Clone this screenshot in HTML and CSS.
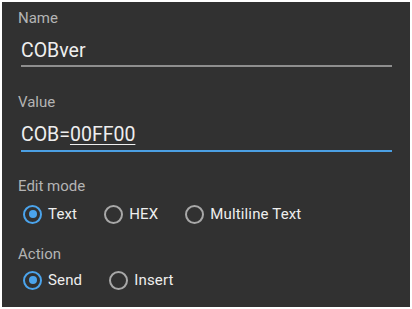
FILE: index.html
```html
<!DOCTYPE html>
<html>
<head>
<meta charset="utf-8">
<link rel="stylesheet" href="styles.css">
</head>
<body>
<div class="panel">
  <div class="label label-name">Name</div>
  <div class="field field-name"><span class="value">COBver</span></div>
  <div class="label label-value">Value</div>
  <div class="field field-active"><span class="value">COB=<span class="compose">00FF00</span></span></div>
  <div class="label label-mode">Edit mode</div>
  <div class="radios radios-mode">
    <div class="radio"><span class="ring checked"></span><span class="rtext">Text</span></div>
    <div class="radio"><span class="ring"></span><span class="rtext">HEX</span></div>
    <div class="radio"><span class="ring"></span><span class="rtext">Multiline Text</span></div>
  </div>
  <div class="label label-action">Action</div>
  <div class="radios radios-action">
    <div class="radio"><span class="ring checked"></span><span class="rtext">Send</span></div>
    <div class="radio"><span class="ring"></span><span class="rtext">Insert</span></div>
  </div>
</div>
</body>
</html>
```

FILE: styles.css
```css
html, body {
  margin: 0;
  padding: 0;
  background: #ffffff;
}
body {
  width: 412px;
  height: 309px;
  overflow: hidden;
  font-family: Roboto, "Liberation Sans", sans-serif;
}
.panel {
  margin: 2px;
  height: 305px;
  background: #313131;
  box-sizing: border-box;
  padding: 7px 18px 0 16px;
  display: flex;
  flex-direction: column;
}
.label {
  font-size: 15px;
  line-height: 18px;
  color: #b4b4b4;
}
.field {
  margin: 12px 0 0 3px;
  font-size: 19.5px;
  line-height: 24px;
  color: #eeeeee;
  padding-bottom: 2px;
  border-bottom: 2px solid #8e8e8e;
}
.field-active {
  border-bottom-color: #4b9fe3;
  padding-bottom: 3px;
}
.compose {
  text-decoration: underline;
  text-decoration-thickness: 1px;
  text-underline-offset: 3px;
}
.label-value { margin-top: 26px; }
.label-mode { margin-top: 25px; }
.label-action { margin-top: 19px; }
.radios {
  display: flex;
  height: 24px;
  align-items: center;
  padding-left: 5px;
}
.radios-mode { margin-top: 7px; }
.radios-action { margin-top: 5px; }
.radio {
  display: flex;
  align-items: center;
  margin-right: 27px;
}
.ring {
  width: 19px;
  height: 19px;
  box-sizing: border-box;
  border: 2px solid #a8a8a8;
  border-radius: 50%;
  position: relative;
}
.ring.checked {
  border-color: #4ba4ec;
}
.ring.checked::after {
  content: "";
  position: absolute;
  left: 3.5px;
  top: 3.5px;
  width: 8px;
  height: 8px;
  border-radius: 50%;
  background: #4ba4ec;
}
.rtext {
  margin-left: 6px;
  font-size: 15px;
  letter-spacing: 0.15px;
  color: #eeeeee;
}
```
